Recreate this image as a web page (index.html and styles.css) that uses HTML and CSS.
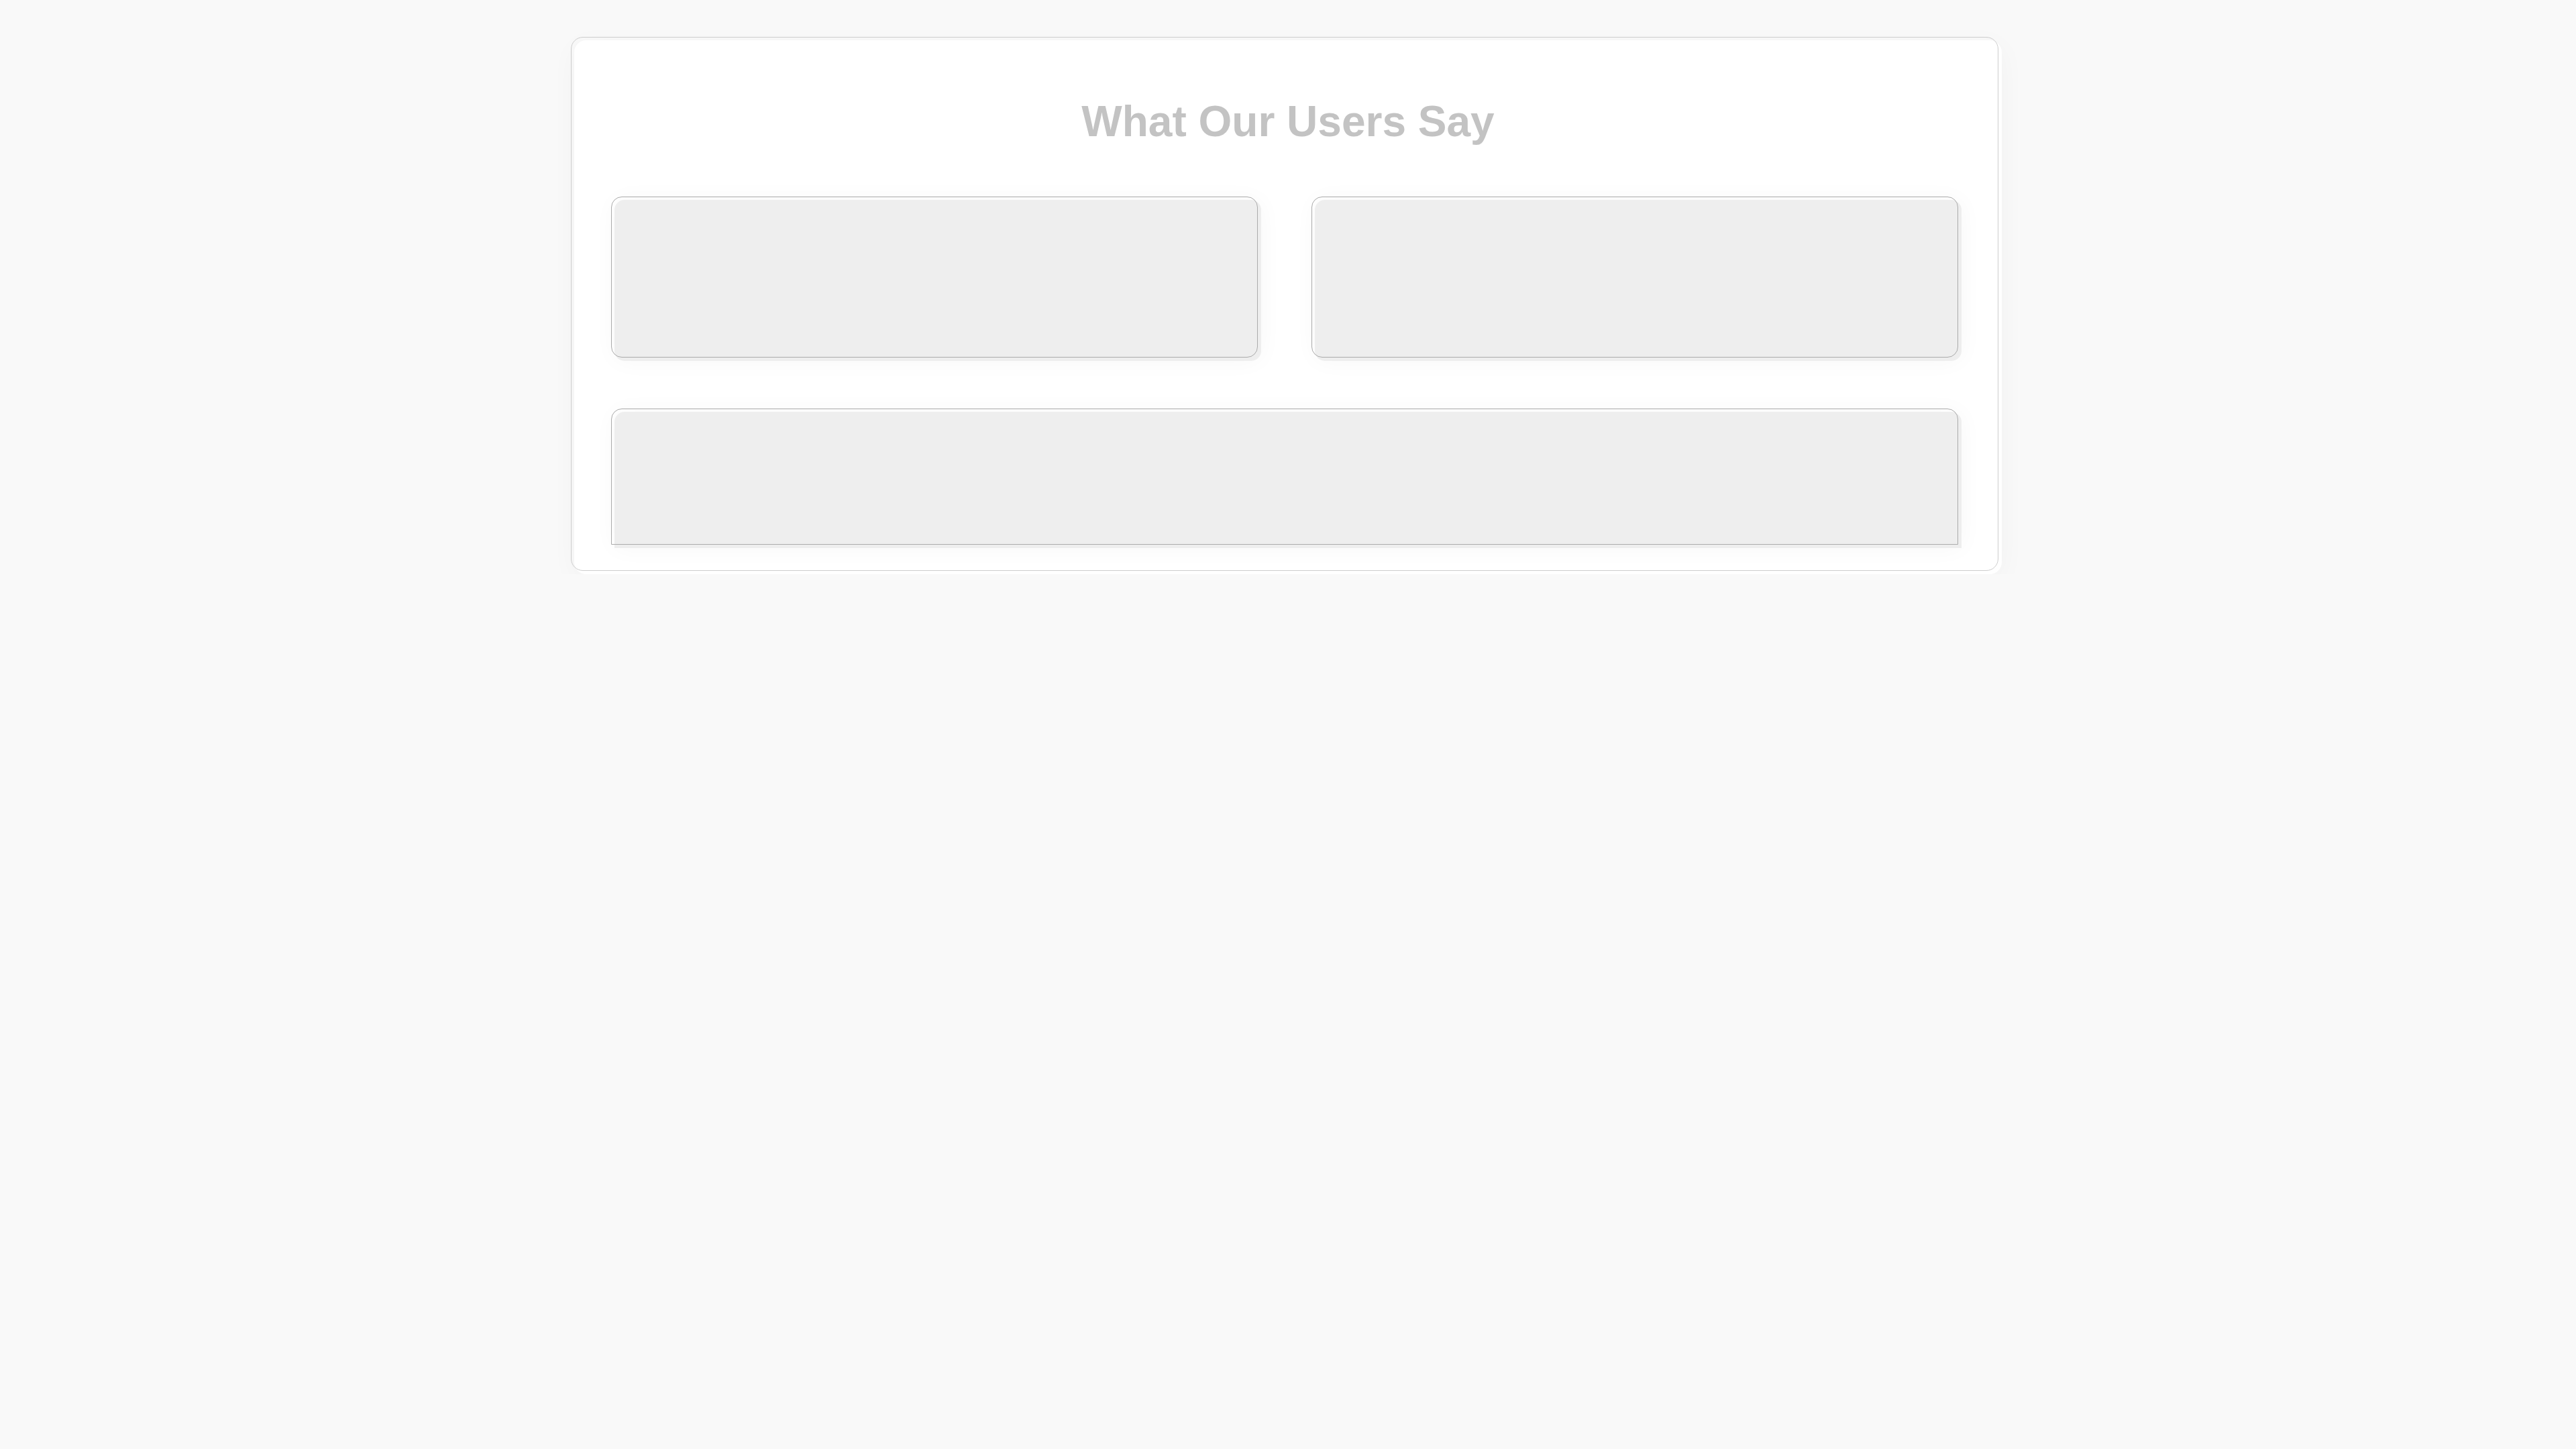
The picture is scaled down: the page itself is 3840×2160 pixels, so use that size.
FILE: index.html
```html
<!DOCTYPE html>
<html lang="en">
<head>
<meta charset="utf-8">
<title>What Our Users Say</title>
<link rel="stylesheet" href="styles.css">
</head>
<body>
<main class="page">
  <section class="card">
    <h2 class="title">What Our Users Say</h2>
    <div class="grid">
      <div class="tile"></div>
      <div class="tile"></div>
      <div class="tile tile-wide"></div>
    </div>
  </section>
</main>
</body>
</html>
```

FILE: styles.css
```css
html, body {
  margin: 0;
  padding: 0;
}
body {
  background: #f9f9f9;
  font-family: "Liberation Sans", Arial, sans-serif;
}
.page {
  display: flex;
  justify-content: center;
  padding-top: 60px;
}
.card {
  position: relative;
  box-sizing: border-box;
  width: 2128px;
  padding: 84px 60px 39px;
  background: #ffffff;
  border-radius: 18px;
  box-shadow: 0 8px 40px rgba(0, 0, 0, 0.035);
}
.card::before {
  content: "";
  position: absolute;
  inset: 0;
  transform: translate(-5px, -5px);
  border: 1px solid #cdcdcd;
  border-radius: 18px;
  pointer-events: none;
}
.title {
  margin: 0 0 80px;
  font-size: 64px;
  font-weight: 700;
  line-height: normal;
  text-align: center;
  color: #c3c3c3;
}
.grid {
  display: grid;
  grid-template-columns: 1fr 1fr;
  column-gap: 80px;
  row-gap: 76px;
}
.tile {
  position: relative;
  height: 240px;
  background: #eeeeee;
  border-radius: 15px;
  box-shadow: 0 0 36px rgba(0, 0, 0, 0.035);
}
.tile::before {
  content: "";
  position: absolute;
  inset: 0;
  transform: translate(-5px, -5px);
  border: 1px solid #ababab;
  border-radius: 16px;
  pointer-events: none;
}
.tile-wide {
  grid-column: 1 / -1;
  height: 203px;
  border-radius: 15px 15px 0 0;
}
.tile-wide::before {
  border-radius: 16px 16px 0 0;
}
```
